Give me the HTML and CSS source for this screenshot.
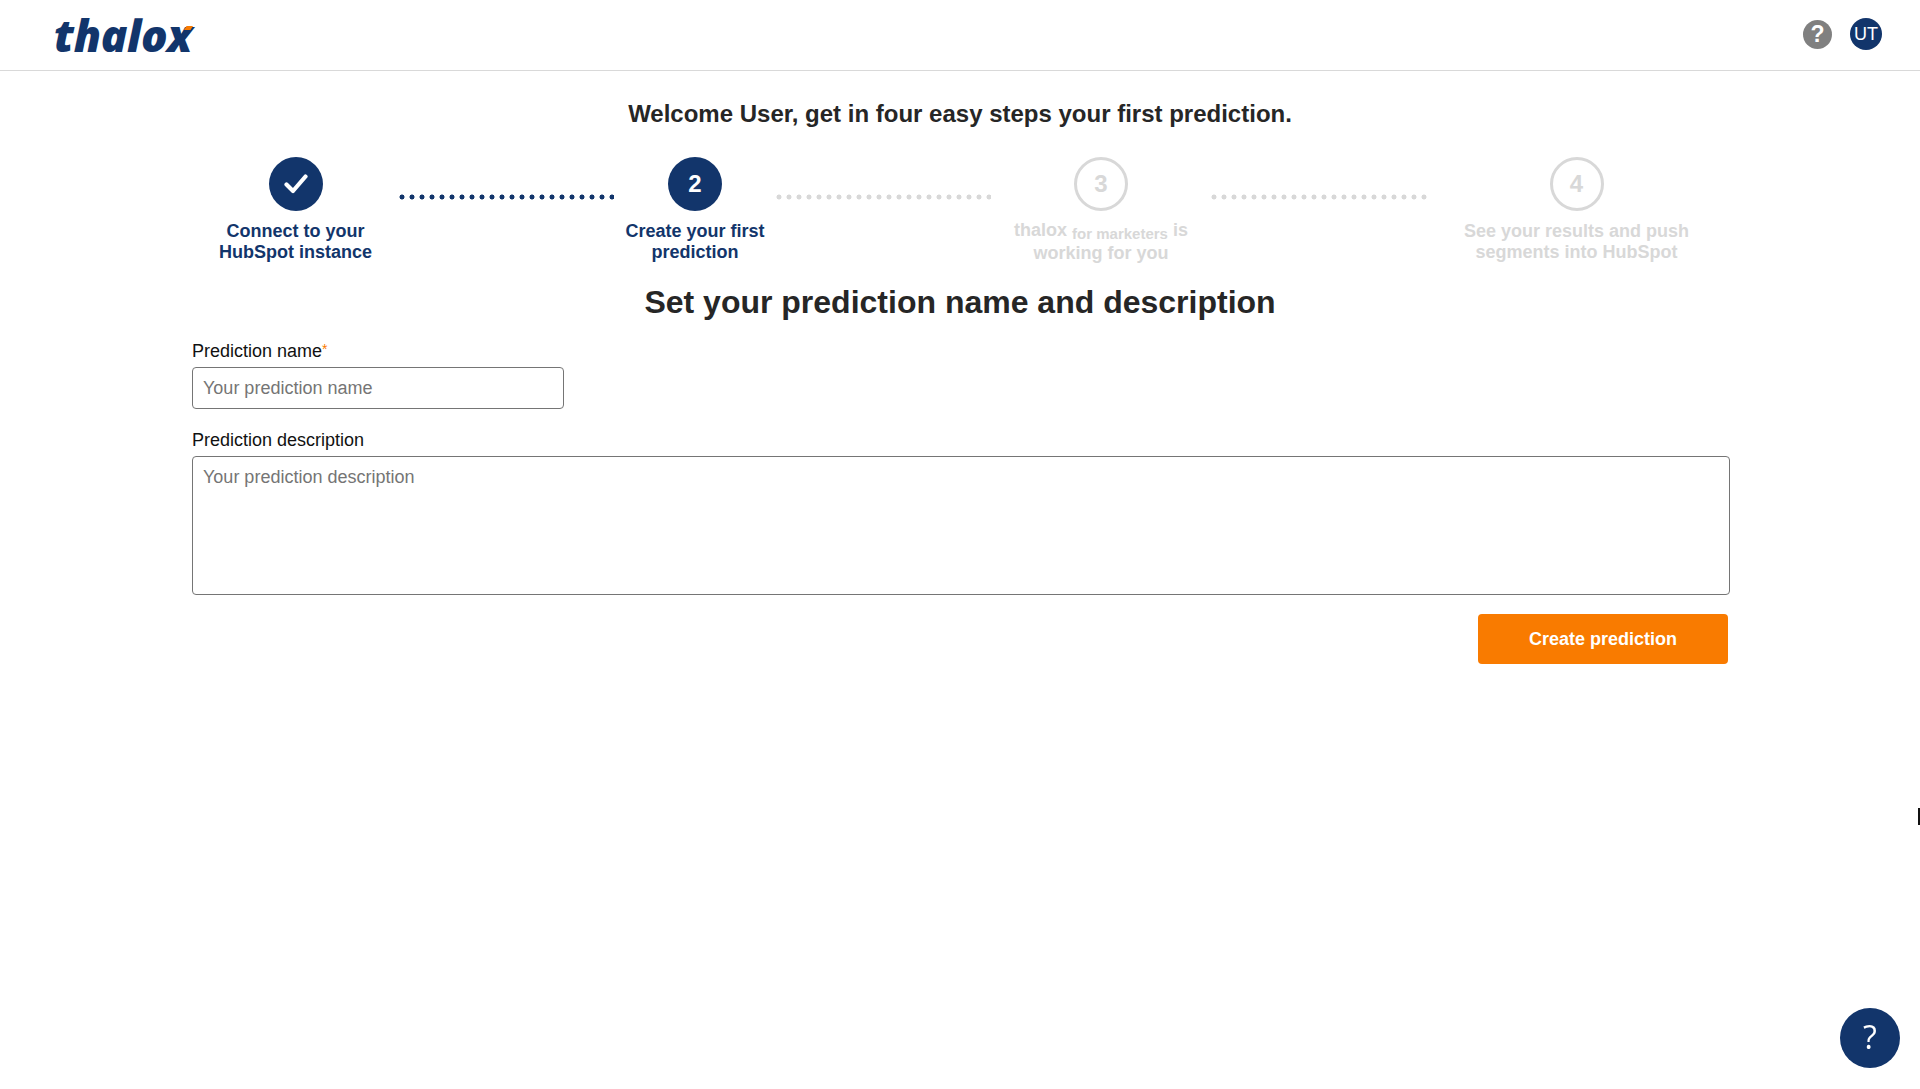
FILE: index.html
```html
<!DOCTYPE html>
<html lang="en">
<head>
  <meta charset="UTF-8" />
  <title>thalox for marketers</title>
  <link rel="stylesheet" href="styles.css">
</head>
<body>
  <header class="topbar">
    <a class="logo" href="#">thalox<svg class="logo-mark" width="9" height="4" viewBox="0 0 9 4"><polygon points="2.500,0 9,0 6.500,4 0,4" fill="#f97b00"/></svg></a>
    <div class="topbar-actions">
      <span class="help-icon">?</span>
      <span class="avatar">UT</span>
    </div>
  </header>

  <main class="content">
    <h1 class="welcome">Welcome User, get in four easy steps your first prediction.</h1>

    <!-- Stepper -->
    <div class="stepper">
      <div class="step done">
        <span class="step-circle">
          <svg width="24" height="20" viewBox="0 0 24 20"><path d="M2.500 10.500 L9 17 L21.500 2.500" fill="none" stroke="#fff" stroke-width="4.200" stroke-linecap="round" stroke-linejoin="round"/></svg>
        </span>
        <span class="step-text">Connect to your<br>HubSpot instance</span>
      </div>
      <div class="dots"></div>
      <div class="step done">
        <span class="step-circle">2</span>
        <span class="step-text">Create your first<br>prediction</span>
      </div>
      <div class="dots off"></div>
      <div class="step off">
        <span class="step-circle">3</span>
        <span class="step-text step-text-tall">thalox <sub>for marketers</sub> is<br>working for you</span>
      </div>
      <div class="dots off"></div>
      <div class="step off">
        <span class="step-circle">4</span>
        <span class="step-text">See your results and push<br>segments into HubSpot</span>
      </div>
    </div>

    <h2 class="form-title">Set your prediction name and description</h2>

    <form class="prediction-form">
      <label class="field-label" for="name">Prediction name<span class="required">*</span></label>
      <input class="field-input" id="name" type="text" placeholder="Your prediction name">

      <label class="field-label" for="description">Prediction description</label>
      <textarea class="field-area" id="description" placeholder="Your prediction description"></textarea>

      <div class="form-actions">
        <button class="btn-primary" type="button">Create prediction</button>
      </div>
    </form>
  </main>

  <button class="help-bubble" type="button">?</button>
  <span class="cursor-mark"></span>
</body>
</html>
```

FILE: styles.css
```css
:root {
  --navy: #12356b;
  --orange: #f97b00;
  --muted: #d8d8d8;
  --text: #262626;
}

* { box-sizing: border-box; margin: 0; padding: 0; }
html, body { height: 100%; font-family: "Liberation Sans", Arial, sans-serif; background: #fff; }

/* === TOP BAR === */
.topbar {
  display: flex;
  align-items: center;
  justify-content: space-between;
  height: 71px;
  padding: 0 38px 2px 54px;
  border-bottom: 1px solid #d9d9d9;
}
.logo {
  position: relative;
  top: 1px;
  font-family: "Open Sans", sans-serif;
  font-size: 44px;
  font-weight: 800;
  font-style: italic;
  line-height: 1;
  letter-spacing: -0.4px;
  color: var(--navy);
  text-decoration: none;
}
.logo-mark {
  position: absolute;
  top: 13px;
  right: -1px;
}
.topbar-actions {
  display: flex;
  align-items: center;
  gap: 18px;
}
.help-icon {
  width: 29px;
  height: 29px;
  border-radius: 50%;
  background: #808080;
  color: #fff;
  font-size: 23px;
  font-weight: 700;
  line-height: 28px;
  text-align: center;
}
.avatar {
  width: 32px;
  height: 32px;
  border-radius: 50%;
  background: var(--navy);
  color: #fff;
  font-size: 18px;
  line-height: 32px;
  text-align: center;
}

/* === CONTENT === */
.content {
  padding: 0 190px;
}
.welcome {
  margin-top: 29px;
  font-size: 24px;
  font-weight: 700;
  line-height: 27px;
  text-align: center;
  color: var(--text);
}

/* === STEPPER === */
.stepper {
  display: grid;
  grid-template-columns: 207px 215px 162px 215px 220px 216px 299px;
  margin: 30px 0 0 2px;
}
.step {
  display: flex;
  flex-direction: column;
  align-items: center;
  text-align: center;
  color: var(--navy);
}
.step-circle {
  display: flex;
  align-items: center;
  justify-content: center;
  width: 54px;
  height: 54px;
  border-radius: 50%;
  background: var(--navy);
  color: #fff;
  font-size: 24px;
  font-weight: 700;
}
.step-text {
  margin-top: 10px;
  font-size: 18px;
  font-weight: 700;
  line-height: 21px;
}
.step-text-tall { line-height: 23px; margin-top: 8px; }
.step-text sub {
  font-size: 15px;
  line-height: 0;
  vertical-align: -3px;
}
.step.off { color: var(--muted); }
.step.off .step-circle {
  background: #fff;
  border: 3px solid var(--muted);
  color: var(--muted);
}
.dots {
  height: 6px;
  margin-top: 37px;
  background: radial-gradient(circle at 3px 3px, var(--navy) 2.200px, transparent 2.800px) 0 0 / 10px 6px repeat-x;
}
.dots.off {
  background: radial-gradient(circle at 3px 3px, var(--muted) 2.200px, transparent 2.800px) 0 0 / 10px 6px repeat-x;
}

.form-title {
  margin-top: 20px;
  font-size: 32px;
  font-weight: 700;
  line-height: 34px;
  text-align: center;
  color: var(--text);
}

/* === FORM === */
.prediction-form {
  display: flex;
  flex-direction: column;
  align-items: flex-start;
  margin-top: 22px;
  padding-left: 2px;
}
.field-label {
  font-size: 18px;
  line-height: 21px;
  color: #111;
  margin-bottom: 5px;
}
.required { color: var(--orange); font-size: 14px; vertical-align: 3px; line-height: 0; }
.field-input, .field-area {
  border: 1px solid #757575;
  border-radius: 4px;
  padding: 0 10px;
  font-family: inherit;
  font-size: 18px;
  color: #111;
  background: #fff;
}
.field-input::placeholder, .field-area::placeholder { color: #757575; }
.field-input {
  width: 372px;
  height: 42px;
  margin-bottom: 21px;
}
.field-area {
  width: 100%;
  height: 139px;
  padding-top: 10px;
  resize: none;
}
.form-actions {
  display: flex;
  justify-content: flex-end;
  width: 100%;
  padding-right: 2px;
  margin-top: 19px;
}
.btn-primary {
  width: 250px;
  height: 50px;
  border: none;
  border-radius: 4px;
  background: var(--orange);
  color: #fff;
  font-family: inherit;
  font-size: 18px;
  font-weight: 700;
  cursor: pointer;
}

/* === OVERLAYS === */
.help-bubble {
  position: fixed;
  right: 20px;
  bottom: 21px;
  width: 60px;
  height: 60px;
  padding-bottom: 3px;
  border: none;
  border-radius: 50%;
  background: var(--navy);
  color: #fff;
  font-family: "Open Sans", sans-serif;
  font-size: 32px;
  cursor: pointer;
}
.cursor-mark {
  position: fixed;
  top: 808px;
  right: 0;
  width: 2px;
  height: 17px;
  background: #111;
}
```
